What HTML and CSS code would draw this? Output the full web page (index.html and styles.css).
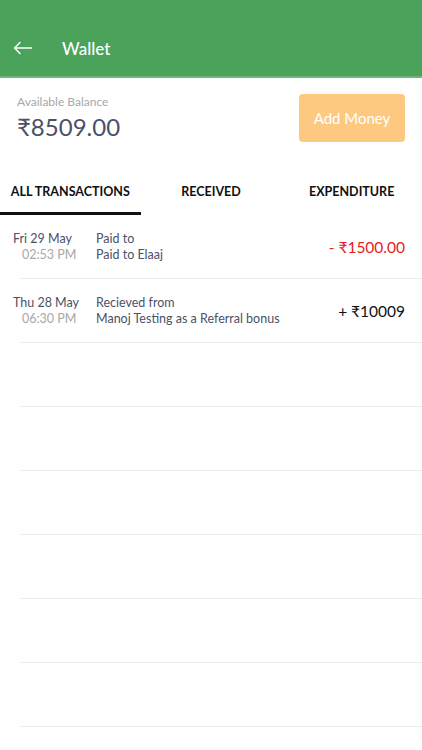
FILE: index.html
```html
<!DOCTYPE html>
<html lang="en">
<head>
    <meta charset="UTF-8">
    <meta name="viewport" content="width=device-width, initial-scale=1.0">
    <title>Wallet</title>
    <link rel="stylesheet" href="styles.css">
</head>
<body>
    <div class="header">
        <svg class="back" width="20" height="14" viewBox="0 0 20 14">
            <path d="M19 7H1.5M7.5 1L1.5 7l6 6" fill="none" stroke="#fff" stroke-width="1.4"/>
        </svg>
        <h1>Wallet</h1>
    </div>

    <div class="balance">
        <div>
            <p class="balance-label">Available Balance</p>
            <p class="balance-amount">₹8509.00</p>
        </div>
        <button class="add-btn">Add Money</button>
    </div>

    <div class="tabs">
        <div class="tab active">ALL TRANSACTIONS</div>
        <div class="tab">RECEIVED</div>
        <div class="tab">EXPENDITURE</div>
    </div>

    <div class="list">
        <div class="row">
            <div class="date">
                <p>Fri 29 May</p>
                <p class="time">02:53 PM</p>
            </div>
            <div class="desc">
                <p>Paid to</p>
                <p>Paid to Elaaj</p>
            </div>
            <div class="amount debit">- ₹1500.00</div>
        </div>
        <div class="row">
            <div class="date">
                <p>Thu 28 May</p>
                <p class="time">06:30 PM</p>
            </div>
            <div class="desc">
                <p>Recieved from</p>
                <p>Manoj Testing as a Referral bonus</p>
            </div>
            <div class="amount credit">+ ₹10009</div>
        </div>
        <div class="row"></div>
        <div class="row"></div>
        <div class="row"></div>
        <div class="row"></div>
        <div class="row"></div>
        <div class="row"></div>
    </div>
</body>
</html>
```

FILE: styles.css
```css
body {
    margin: 0;
    font-family: Lato, "Noto Sans", sans-serif;
    background: #fff;
    overflow: hidden;
}
p {
    margin: 0;
}
.header {
    height: 78px;
    background: #4ba25a;
    border-bottom: 2px solid #6fb67a;
    display: flex;
    align-items: center;
    padding: 20px 0 0 13px;
    box-sizing: border-box;
}
.back {
    display: block;
}
.header h1 {
    margin: 0 0 0 29px;
    color: #fff;
    font-size: 17px;
    font-weight: 500;
}
.balance {
    display: flex;
    justify-content: space-between;
    padding: 16px 17px 0 17px;
    height: 93px;
    box-sizing: border-box;
}
.balance-label {
    font-size: 12px;
    color: #a8a8a8;
    line-height: 16px;
}
.balance-amount {
    font-size: 24px;
    color: #4b5168;
    line-height: 32px;
    margin-top: 1px;
}
.add-btn {
    width: 106px;
    height: 48px;
    background: #fdc981;
    border: none;
    border-radius: 4px;
    color: #fff;
    font-family: inherit;
    font-size: 15px;
}
.tabs {
    display: flex;
    height: 44px;
}
.tab {
    flex: 1;
    text-align: center;
    font-size: 12.5px;
    font-weight: 700;
    color: #111;
    line-height: 41px;
}
.tab.active {
    border-bottom: 3px solid #111;
}
.row {
    height: 64px;
    margin-left: 20px;
    border-bottom: 1px solid #ececec;
    display: flex;
    align-items: center;
    box-sizing: border-box;
}
.date {
    width: 83px;
    margin-left: -7px;
    font-size: 12.5px;
    color: #4b5168;
    line-height: 16px;
}
.date .time {
    color: #a8a8a8;
    padding-left: 9px;
}
.desc {
    flex: 1;
    font-size: 12.5px;
    color: #4b5168;
    line-height: 16px;
}
.amount {
    font-size: 15.5px;
    padding-right: 17px;
}
.debit {
    color: #e8201f;
}
.credit {
    color: #111;
}
```
